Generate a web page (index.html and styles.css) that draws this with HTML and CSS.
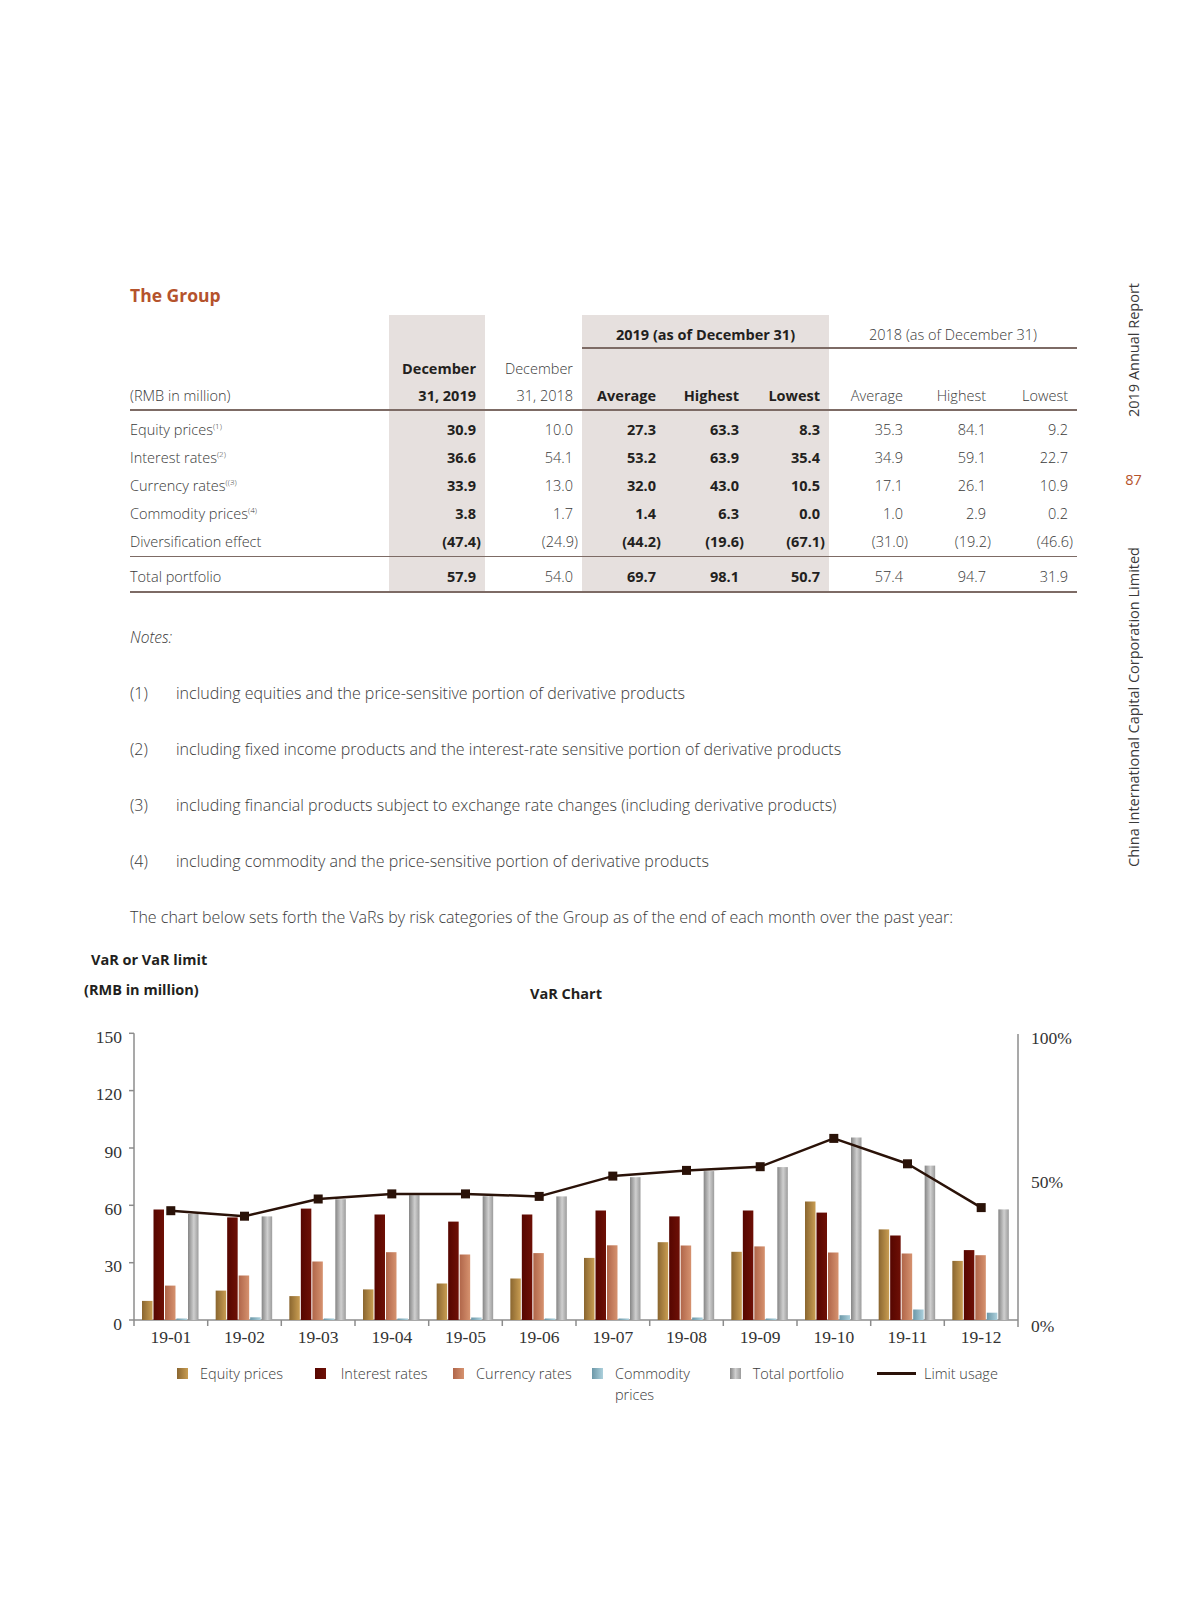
FILE: index.html
```html
<!DOCTYPE html>
<html lang="en">
<head>
<meta charset="utf-8">
<title>VaR – The Group</title>
<link rel="stylesheet" href="styles.css">
</head>
<body>
<div class="page">
  <main class="main">
    <h2 class="title">The Group</h2>

    <table class="var-table">
      <colgroup>
        <col class="c-label"><col class="c-dec"><col class="c-dec2">
        <col class="c-num"><col class="c-num"><col class="c-num3">
        <col class="c-num"><col class="c-num"><col class="c-num4">
      </colgroup>
      <thead>
        <tr class="group-row">
          <th></th>
          <th class="shade"></th>
          <th></th>
          <th colspan="3" class="shade group bold">2019 (as of December 31)</th>
          <th colspan="3" class="group">2018 (as of December 31)</th>
        </tr>
        <tr class="col-row">
          <th class="label">(RMB in million)</th>
          <th class="shade bold">December<br>31, 2019</th>
          <th>December<br>31, 2018</th>
          <th class="shade bold">Average</th>
          <th class="shade bold">Highest</th>
          <th class="shade bold">Lowest</th>
          <th>Average</th>
          <th>Highest</th>
          <th>Lowest</th>
        </tr>
      </thead>
      <tbody>
        <tr class="first">
          <td class="label">Equity prices<sup>(1)</sup></td>
          <td class="shade bold">30.9</td><td>10.0</td>
          <td class="shade bold">27.3</td><td class="shade bold">63.3</td><td class="shade bold">8.3</td>
          <td>35.3</td><td>84.1</td><td>9.2</td>
        </tr>
        <tr>
          <td class="label">Interest rates<sup>(2)</sup></td>
          <td class="shade bold">36.6</td><td>54.1</td>
          <td class="shade bold">53.2</td><td class="shade bold">63.9</td><td class="shade bold">35.4</td>
          <td>34.9</td><td>59.1</td><td>22.7</td>
        </tr>
        <tr>
          <td class="label">Currency rates<sup>((3)</sup></td>
          <td class="shade bold">33.9</td><td>13.0</td>
          <td class="shade bold">32.0</td><td class="shade bold">43.0</td><td class="shade bold">10.5</td>
          <td>17.1</td><td>26.1</td><td>10.9</td>
        </tr>
        <tr>
          <td class="label">Commodity prices<sup>(4)</sup></td>
          <td class="shade bold">3.8</td><td>1.7</td>
          <td class="shade bold">1.4</td><td class="shade bold">6.3</td><td class="shade bold">0.0</td>
          <td>1.0</td><td>2.9</td><td>0.2</td>
        </tr>
        <tr>
          <td class="label">Diversification effect</td>
          <td class="shade bold">(47.4<span class="paren">)</span></td><td>(24.9<span class="paren">)</span></td>
          <td class="shade bold">(44.2<span class="paren">)</span></td><td class="shade bold">(19.6<span class="paren">)</span></td><td class="shade bold">(67.1<span class="paren">)</span></td>
          <td>(31.0<span class="paren">)</span></td><td>(19.2<span class="paren">)</span></td><td>(46.6<span class="paren">)</span></td>
        </tr>
        <tr class="total">
          <td class="label">Total portfolio</td>
          <td class="shade bold">57.9</td><td>54.0</td>
          <td class="shade bold">69.7</td><td class="shade bold">98.1</td><td class="shade bold">50.7</td>
          <td>57.4</td><td>94.7</td><td>31.9</td>
        </tr>
      </tbody>
    </table>

    <p class="notes-title">Notes:</p>
    <ol class="notes">
      <li><span class="num">(1)</span><span>including equities and the price-sensitive portion of derivative products</span></li>
      <li><span class="num">(2)</span><span>including fixed income products and the interest-rate sensitive portion of derivative products</span></li>
      <li><span class="num">(3)</span><span>including financial products subject to exchange rate changes (including derivative products)</span></li>
      <li><span class="num">(4)</span><span>including commodity and the price-sensitive portion of derivative products</span></li>
    </ol>
    <p class="lead">The chart below sets forth the VaRs by risk categories of the Group as of the end of each month over the past year:</p>

    <section class="chart">
      <div class="chart-ylabel">VaR or VaR limit</div>
      <div class="chart-head">
        <div class="chart-unit">(RMB in million)</div>
        <div class="chart-title">VaR Chart</div>
      </div>
      <svg class="chart-svg" width="1077" height="345" viewBox="0 0 1077 345" xmlns="http://www.w3.org/2000/svg">
        <defs>
          <linearGradient id="gEq" x1="0" x2="1" y1="0" y2="0"><stop offset="0" stop-color="#8a6630"/><stop offset="1" stop-color="#c99d52"/></linearGradient>
          <linearGradient id="gInt" x1="0" x2="1" y1="0" y2="0"><stop offset="0" stop-color="#560600"/><stop offset="1" stop-color="#6e1006"/></linearGradient>
          <linearGradient id="gCur" x1="0" x2="1" y1="0" y2="0"><stop offset="0" stop-color="#b0664a"/><stop offset="1" stop-color="#d6926f"/></linearGradient>
          <linearGradient id="gCom" x1="0" x2="1" y1="0" y2="0"><stop offset="0" stop-color="#6c98a8"/><stop offset="1" stop-color="#acd0dc"/></linearGradient>
          <linearGradient id="gTot" x1="0" x2="1" y1="0" y2="0"><stop offset="0" stop-color="#858585"/><stop offset="0.55" stop-color="#cfcfcf"/><stop offset="1" stop-color="#9c9c9c"/></linearGradient>
        </defs>

        <g class="axis">
          <line x1="134" y1="19.3" x2="134" y2="312"/>
          <line x1="129" y1="19.3" x2="134" y2="19.3"/>
          <line x1="129" y1="76.6" x2="134" y2="76.6"/>
          <line x1="129" y1="134" x2="134" y2="134"/>
          <line x1="129" y1="191.3" x2="134" y2="191.3"/>
          <line x1="129" y1="248.7" x2="134" y2="248.7"/>
          <line x1="129" y1="306" x2="1018" y2="306"/>
          <line x1="1018" y1="20" x2="1018" y2="313"/>
          <line x1="207.7" y1="306" x2="207.7" y2="312"/>
          <line x1="281.3" y1="306" x2="281.3" y2="312"/>
          <line x1="355" y1="306" x2="355" y2="312"/>
          <line x1="428.7" y1="306" x2="428.7" y2="312"/>
          <line x1="502.3" y1="306" x2="502.3" y2="312"/>
          <line x1="576" y1="306" x2="576" y2="312"/>
          <line x1="649.7" y1="306" x2="649.7" y2="312"/>
          <line x1="723.3" y1="306" x2="723.3" y2="312"/>
          <line x1="797" y1="306" x2="797" y2="312"/>
          <line x1="870.7" y1="306" x2="870.7" y2="312"/>
          <line x1="944.3" y1="306" x2="944.3" y2="312"/>
        </g>

        <g class="ylab" text-anchor="end">
          <text x="122" y="29">150</text>
          <text x="122" y="86">120</text>
          <text x="122" y="143.5">90</text>
          <text x="122" y="201">60</text>
          <text x="122" y="258">30</text>
          <text x="122" y="315.5">0</text>
        </g>
        <g class="ylab">
          <text x="1031" y="29.5">100%</text>
          <text x="1031" y="173.5">50%</text>
          <text x="1031" y="317.5">0%</text>
        </g>

        <g class="bars">
          <g transform="translate(134,0)">
            <rect x="8" y="286.9" width="10.5" height="19.1" fill="url(#gEq)"/>
            <rect x="19.5" y="195.5" width="10.5" height="110.5" fill="url(#gInt)"/>
            <rect x="31" y="271.6" width="10.5" height="34.4" fill="url(#gCur)"/>
            <rect x="42.5" y="304.5" width="10.5" height="1.5" fill="url(#gCom)"/>
            <rect x="54" y="199.9" width="10.5" height="106.1" fill="url(#gTot)"/>
          </g>
          <g transform="translate(207.67,0)">
            <rect x="8" y="276.6" width="10.5" height="29.4" fill="url(#gEq)"/>
            <rect x="19.5" y="203.4" width="10.5" height="102.6" fill="url(#gInt)"/>
            <rect x="31" y="261.5" width="10.5" height="44.5" fill="url(#gCur)"/>
            <rect x="42.5" y="303.3" width="10.5" height="2.7" fill="url(#gCom)"/>
            <rect x="54" y="202.4" width="10.5" height="103.6" fill="url(#gTot)"/>
          </g>
          <g transform="translate(281.33,0)">
            <rect x="8" y="282.1" width="10.5" height="23.9" fill="url(#gEq)"/>
            <rect x="19.5" y="194.6" width="10.5" height="111.4" fill="url(#gInt)"/>
            <rect x="31" y="247.5" width="10.5" height="58.5" fill="url(#gCur)"/>
            <rect x="42.5" y="304.5" width="10.5" height="1.5" fill="url(#gCom)"/>
            <rect x="54" y="185.2" width="10.5" height="120.8" fill="url(#gTot)"/>
          </g>
          <g transform="translate(355,0)">
            <rect x="8" y="275.4" width="10.5" height="30.6" fill="url(#gEq)"/>
            <rect x="19.5" y="200.5" width="10.5" height="105.5" fill="url(#gInt)"/>
            <rect x="31" y="238.2" width="10.5" height="67.8" fill="url(#gCur)"/>
            <rect x="42.5" y="304.5" width="10.5" height="1.5" fill="url(#gCom)"/>
            <rect x="54" y="181.2" width="10.5" height="124.8" fill="url(#gTot)"/>
          </g>
          <g transform="translate(428.67,0)">
            <rect x="8" y="269.5" width="10.5" height="36.5" fill="url(#gEq)"/>
            <rect x="19.5" y="207.6" width="10.5" height="98.4" fill="url(#gInt)"/>
            <rect x="31" y="240.5" width="10.5" height="65.5" fill="url(#gCur)"/>
            <rect x="42.5" y="303.5" width="10.5" height="2.5" fill="url(#gCom)"/>
            <rect x="54" y="182.2" width="10.5" height="123.8" fill="url(#gTot)"/>
          </g>
          <g transform="translate(502.33,0)">
            <rect x="8" y="264.5" width="10.5" height="41.5" fill="url(#gEq)"/>
            <rect x="19.5" y="200.5" width="10.5" height="105.5" fill="url(#gInt)"/>
            <rect x="31" y="239.1" width="10.5" height="66.9" fill="url(#gCur)"/>
            <rect x="42.5" y="304.5" width="10.5" height="1.5" fill="url(#gCom)"/>
            <rect x="54" y="182.4" width="10.5" height="123.6" fill="url(#gTot)"/>
          </g>
          <g transform="translate(576,0)">
            <rect x="8" y="243.9" width="10.5" height="62.1" fill="url(#gEq)"/>
            <rect x="19.5" y="196.5" width="10.5" height="109.5" fill="url(#gInt)"/>
            <rect x="31" y="231.3" width="10.5" height="74.7" fill="url(#gCur)"/>
            <rect x="42.5" y="304.5" width="10.5" height="1.5" fill="url(#gCom)"/>
            <rect x="54" y="163.2" width="10.5" height="142.8" fill="url(#gTot)"/>
          </g>
          <g transform="translate(649.67,0)">
            <rect x="8" y="228.2" width="10.5" height="77.8" fill="url(#gEq)"/>
            <rect x="19.5" y="202.4" width="10.5" height="103.6" fill="url(#gInt)"/>
            <rect x="31" y="231.5" width="10.5" height="74.5" fill="url(#gCur)"/>
            <rect x="42.5" y="303.5" width="10.5" height="2.5" fill="url(#gCom)"/>
            <rect x="54" y="157.1" width="10.5" height="148.9" fill="url(#gTot)"/>
          </g>
          <g transform="translate(723.33,0)">
            <rect x="8" y="237.8" width="10.5" height="68.2" fill="url(#gEq)"/>
            <rect x="19.5" y="196.5" width="10.5" height="109.5" fill="url(#gInt)"/>
            <rect x="31" y="232.4" width="10.5" height="73.6" fill="url(#gCur)"/>
            <rect x="42.5" y="304.5" width="10.5" height="1.5" fill="url(#gCom)"/>
            <rect x="54" y="153.1" width="10.5" height="152.9" fill="url(#gTot)"/>
          </g>
          <g transform="translate(797,0)">
            <rect x="8" y="187.5" width="10.5" height="118.5" fill="url(#gEq)"/>
            <rect x="19.5" y="198.6" width="10.5" height="107.4" fill="url(#gInt)"/>
            <rect x="31" y="238.5" width="10.5" height="67.5" fill="url(#gCur)"/>
            <rect x="42.5" y="301.2" width="10.5" height="4.8" fill="url(#gCom)"/>
            <rect x="54" y="123.5" width="10.5" height="182.5" fill="url(#gTot)"/>
          </g>
          <g transform="translate(870.67,0)">
            <rect x="8" y="215.4" width="10.5" height="90.6" fill="url(#gEq)"/>
            <rect x="19.5" y="221.5" width="10.5" height="84.5" fill="url(#gInt)"/>
            <rect x="31" y="239.5" width="10.5" height="66.5" fill="url(#gCur)"/>
            <rect x="42.5" y="295.5" width="10.5" height="10.5" fill="url(#gCom)"/>
            <rect x="54" y="151.6" width="10.5" height="154.4" fill="url(#gTot)"/>
          </g>
          <g transform="translate(944.33,0)">
            <rect x="8" y="246.9" width="10.5" height="59.1" fill="url(#gEq)"/>
            <rect x="19.5" y="236.1" width="10.5" height="69.9" fill="url(#gInt)"/>
            <rect x="31" y="241.2" width="10.5" height="64.8" fill="url(#gCur)"/>
            <rect x="42.5" y="298.7" width="10.5" height="7.3" fill="url(#gCom)"/>
            <rect x="54" y="195.4" width="10.5" height="110.6" fill="url(#gTot)"/>
          </g>
        </g>

        <polyline class="limit" points="170.8,196.7 244.5,202.2 318.2,185 391.8,179.9 465.5,179.9 539.2,182.4 612.8,162.1 686.5,156.4 760.2,152.7 833.8,124.4 907.5,149.8 981.2,193.6"/>
        <g class="markers">
          <rect x="166.3" y="192.2" width="9" height="9"/>
          <rect x="240" y="197.7" width="9" height="9"/>
          <rect x="313.7" y="180.5" width="9" height="9"/>
          <rect x="387.3" y="175.4" width="9" height="9"/>
          <rect x="461" y="175.4" width="9" height="9"/>
          <rect x="534.7" y="177.9" width="9" height="9"/>
          <rect x="608.3" y="157.6" width="9" height="9"/>
          <rect x="682" y="151.9" width="9" height="9"/>
          <rect x="755.7" y="148.2" width="9" height="9"/>
          <rect x="829.3" y="119.9" width="9" height="9"/>
          <rect x="903" y="145.3" width="9" height="9"/>
          <rect x="976.7" y="189.1" width="9" height="9"/>
        </g>

        <g class="xlab" text-anchor="middle">
          <text x="170.8" y="329">19-01</text>
          <text x="244.5" y="329">19-02</text>
          <text x="318.2" y="329">19-03</text>
          <text x="391.8" y="329">19-04</text>
          <text x="465.5" y="329">19-05</text>
          <text x="539.2" y="329">19-06</text>
          <text x="612.8" y="329">19-07</text>
          <text x="686.5" y="329">19-08</text>
          <text x="760.2" y="329">19-09</text>
          <text x="833.8" y="329">19-10</text>
          <text x="907.5" y="329">19-11</text>
          <text x="981.2" y="329">19-12</text>
        </g>
      </svg>

      <ul class="legend">
        <li class="lg-item w1"><span class="swatch sw-eq"></span><span>Equity prices</span></li>
        <li class="lg-item w2"><span class="swatch sw-int"></span><span>Interest rates</span></li>
        <li class="lg-item w3"><span class="swatch sw-cur"></span><span>Currency rates</span></li>
        <li class="lg-item w4"><span class="swatch sw-com"></span><span class="wrap">Commodity prices</span></li>
        <li class="lg-item w5"><span class="swatch sw-tot"></span><span>Total portfolio</span></li>
        <li class="lg-item"><span class="lg-line"></span><span>Limit usage</span></li>
      </ul>
    </section>
  </main>

  <aside class="sidebar">
    <div class="vtext">2019 Annual Report</div>
    <div class="pageno">87</div>
    <div class="vtext vtext-co">China International Capital Corporation Limited</div>
  </aside>
</div>
</body>
</html>
```

FILE: styles.css
```css
* { box-sizing: border-box; }

html, body {
  margin: 0;
  padding: 0;
  background: #ffffff;
}

body {
  font-family: "Open Sans", "Liberation Sans", sans-serif;
  color: #3a3a3a;
  width: 1190px;
  height: 1615px;
  overflow: hidden;
}

.page {
  display: flex;
  align-items: flex-start;
}

.main {
  width: 1077px;
  padding-top: 284px;
  flex: none;
}

.title {
  margin: 0 0 0 130px;
  font-size: 17.5px;
  line-height: 22px;
  font-weight: 700;
  color: #b5532c;
}

/* ---------- table ---------- */
.var-table {
  margin: 9px 0 0 130px;
  width: 947px;
  border-collapse: collapse;
  table-layout: fixed;
  font-size: 14.5px;
}

.c-label { width: 259px; }
.c-dec { width: 96px; }
.c-dec2 { width: 97px; }
.c-num { width: 83px; }
.c-num3 { width: 81px; }
.c-num4 { width: 82px; }

.var-table th,
.var-table td {
  padding: 0 9px;
  text-align: right;
  font-weight: 300;
  line-height: 28px;
  color: #3a3a3a;
  white-space: nowrap;
}

.var-table .label {
  text-align: left;
  padding-left: 0;
}

.var-table .bold {
  font-weight: 700;
  color: #231f20;
}

.var-table .shade {
  background: #e6e0de;
}

.group-row th {
  padding-top: 10px;
  padding-bottom: 2px;
  line-height: 20px;
}

.group-row .group {
  text-align: center;
  border-bottom: 2px solid #7d6b65;
}

.col-row th {
  padding-top: 7px;
  line-height: 27px;
  vertical-align: bottom;
  border-bottom: 2px solid #7d6b65;
}

.var-table tr.first td {
  padding-top: 5px;
}

.var-table tr.total td {
  border-top: 1px solid #7d6b65;
  border-bottom: 2px solid #7d6b65;
  padding-top: 6px;
}

.var-table sup {
  font-size: 8px;
  line-height: 0;
  vertical-align: 6px;
}

.paren {
  margin-right: -5px;
}

/* ---------- notes ---------- */
.notes-title {
  margin: 33px 0 0 130px;
  font-size: 15.5px;
  line-height: 22px;
  font-style: italic;
  font-weight: 300;
}

.notes {
  list-style: none;
  margin: 34px 0 0 130px;
  padding: 0;
  display: flex;
  flex-direction: column;
  gap: 34px;
  font-size: 16px;
  line-height: 22px;
  font-weight: 300;
}

.notes li {
  display: flex;
}

.notes .num {
  width: 46px;
  flex: none;
}

.lead {
  margin: 34px 0 0 130px;
  font-size: 16px;
  line-height: 22px;
  font-weight: 300;
}

/* ---------- chart ---------- */
.chart {
  margin-top: 22px;
}

.chart-ylabel {
  margin-left: 91px;
  font-size: 14.5px;
  line-height: 20px;
  font-weight: 700;
  color: #231f20;
}

.chart-head {
  display: flex;
  margin-top: 10px;
  font-size: 14.5px;
  line-height: 20px;
  font-weight: 700;
  color: #231f20;
}

.chart-unit {
  margin-left: 84px;
  width: 446px;
}

.chart-title {
  padding-top: 4px;
}

.chart-svg {
  display: block;
  margin-top: 10px;
}

.axis line {
  stroke: #8c8c8c;
  stroke-width: 1.5;
}

.ylab text,
.xlab text {
  font-family: "Liberation Serif", "DejaVu Serif", serif;
  font-size: 17.5px;
  fill: #333333;
}

.limit {
  fill: none;
  stroke: #2a1208;
  stroke-width: 2.5;
  stroke-linejoin: round;
}

.markers rect {
  fill: #2a1208;
}

.legend {
  list-style: none;
  margin: 4px 0 0 177px;
  padding: 0;
  display: flex;
  align-items: flex-start;
  font-size: 14.5px;
  line-height: 21px;
  font-weight: 300;
  color: #3a3a3a;
}

.lg-item {
  display: flex;
  align-items: flex-start;
  flex: none;
}

.w1 { width: 137.7px; }
.w2 { width: 138.4px; }
.w3 { width: 138.9px; }
.w4 { width: 137.7px; }
.w5 { width: 147.3px; }

.swatch {
  width: 11px;
  height: 11px;
  margin: 5px 12px 0 0;
  flex: none;
}

.w2 .swatch { margin-right: 15px; }

.sw-eq { background: linear-gradient(90deg, #8a6630, #c99d52); }
.sw-int { background: linear-gradient(90deg, #560600, #6e1006); }
.sw-cur { background: linear-gradient(90deg, #b0664a, #d6926f); }
.sw-com { background: linear-gradient(90deg, #6c98a8, #acd0dc); }
.sw-tot { background: linear-gradient(90deg, #858585, #cfcfcf, #9c9c9c); }

.wrap {
  width: 86px;
  text-align: left;
}

.lg-line {
  width: 39px;
  height: 3px;
  background: #2a1208;
  margin: 9px 8px 0 0;
  flex: none;
}

/* ---------- sidebar ---------- */
.sidebar {
  width: 113px;
  flex: none;
  display: flex;
  flex-direction: column;
  align-items: center;
  padding-top: 283px;
  font-size: 14.5px;
  color: #3a3a3a;
}

.vtext {
  writing-mode: vertical-rl;
  transform: rotate(180deg);
  line-height: 20px;
  white-space: nowrap;
}

.pageno {
  margin-top: 54px;
  line-height: 18px;
  color: #b5532c;
}

.vtext-co {
  margin-top: 58px;
}
```
